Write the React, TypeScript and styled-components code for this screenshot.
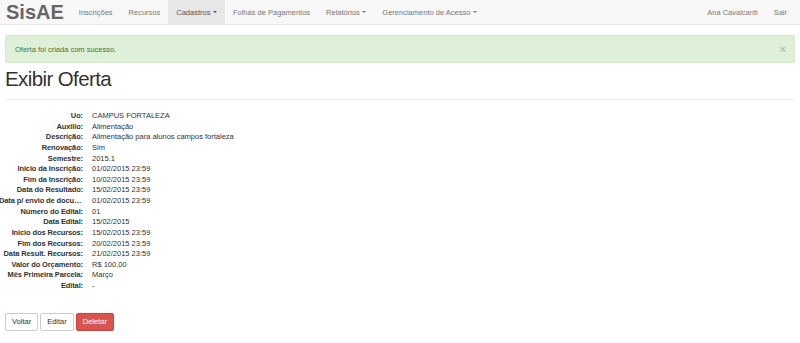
import { Fragment } from "react";
import styled, { createGlobalStyle } from "styled-components";

const GlobalStyle = createGlobalStyle`
    body {
        margin: 0;
        background: #fff;
        font-family: "Liberation Sans", Arial, sans-serif;
        color: #333;
    }
`;

const Navbar = styled.nav`
    display: flex;
    align-items: stretch;
    height: 24px;
    background-color: #f8f8f8;
    border-bottom: 1px solid #e7e7e7;
    padding: 0 5px 0 5px;
`;

const Brand = styled.a`
    display: flex;
    align-items: center;
    font-size: 20px;
    font-weight: 700;
    color: #666;
    padding: 0 7px 0 1px;
    text-decoration: none;
`;

const NavList = styled.ul`
    display: flex;
    list-style: none;
    margin: 0;
    padding: 0;
`;

const RightList = styled(NavList)`
    margin-left: auto;
`;

const NavItem = styled.li<{ $active?: boolean }>`
    display: flex;
    align-items: center;
    padding: 0 8px;
    font-size: 7.5px;
    color: ${(p) => (p.$active ? "#555" : "#777")};
    background-color: ${(p) => (p.$active ? "#e7e7e7" : "transparent")};
    white-space: nowrap;
`;

const Caret = styled.span`
    display: inline-block;
    width: 0;
    height: 0;
    margin-left: 2.5px;
    border-top: 2px solid currentColor;
    border-left: 2px solid transparent;
    border-right: 2px solid transparent;
`;

const Container = styled.main`
    padding: 10px 5px 0 5px;
`;

const Alert = styled.div`
    display: flex;
    align-items: center;
    height: 26px;
    padding: 0 9px;
    background-color: #dff0d8;
    border: 1px solid #d6e9c6;
    border-radius: 2px;
    color: #3c763d;
    font-size: 7.5px;
`;

const Close = styled.span`
    margin-left: auto;
    margin-right: -1px;
    font-size: 11px;
    font-weight: 700;
    color: #000;
    opacity: 0.2;
`;

const Title = styled.h1`
    margin: 4px 0 0 0;
    font-size: 20.5px;
    font-weight: 400;
    letter-spacing: -0.6px;
    line-height: 23px;
    color: #333;
`;

const Rule = styled.hr`
    margin: 9px 0 11px 0;
    border: 0;
    border-top: 1px solid #eee;
`;

const Details = styled.dl`
    display: grid;
    grid-template-columns: 84px 1fr;
    column-gap: 9px;
    margin: 0 0 0 -6px;
    font-size: 7.5px;
    line-height: 10.625px;
`;

const Term = styled.dt`
    font-weight: 700;
    letter-spacing: -0.12px;
    text-align: right;
    white-space: nowrap;
    overflow: hidden;
    text-overflow: ellipsis;
`;

const Desc = styled.dd`
    margin: 0;
`;

const Actions = styled.div`
    display: flex;
    gap: 2px;
    margin-top: 21px;
`;

const Button = styled.button<{ $danger?: boolean }>`
    height: 18px;
    padding: 0 6px;
    margin: 0;
    font-family: inherit;
    font-size: 7.5px;
    border-radius: 2px;
    border: 1px solid ${(p) => (p.$danger ? "#d43f3a" : "#ccc")};
    background-color: ${(p) => (p.$danger ? "#d9534f" : "#fff")};
    color: ${(p) => (p.$danger ? "#fff" : "#333")};
`;

const rows: [string, string][] = [
    ["Uo:", "CAMPUS FORTALEZA"],
    ["Auxilio:", "Alimentação"],
    ["Descrição:", "Alimentação para alunos campos fortaleza"],
    ["Renovação:", "Sim"],
    ["Semestre:", "2015.1"],
    ["Inicio da Inscrição:", "01/02/2015 23:59"],
    ["Fim da Inscrição:", "10/02/2015 23:59"],
    ["Data do Resultado:", "15/02/2015 23:59"],
    ["Data p/ envio de documentos:", "01/02/2015 23:59"],
    ["Número do Edital:", "01"],
    ["Data Edital:", "15/02/2015"],
    ["Inicio dos Recursos:", "15/02/2015 23:59"],
    ["Fim dos Recursos:", "20/02/2015 23:59"],
    ["Data Result. Recursos:", "21/02/2015 23:59"],
    ["Valor do Orçamento:", "R$ 100,00"],
    ["Mês Primeira Parcela:", "Março"],
    ["Edital:", "-"],
];

export default function App() {
    return (
        <>
            <GlobalStyle />
            <Navbar>
                <Brand>SisAE</Brand>
                <NavList>
                    <NavItem>Inscrições</NavItem>
                    <NavItem>Recursos</NavItem>
                    <NavItem $active>Cadastros<Caret /></NavItem>
                    <NavItem>Folhas de Pagamentos</NavItem>
                    <NavItem>Relatórios<Caret /></NavItem>
                    <NavItem>Gerenciamento de Acesso<Caret /></NavItem>
                </NavList>
                <RightList>
                    <NavItem>Ana Cavalcanti</NavItem>
                    <NavItem>Sair</NavItem>
                </RightList>
            </Navbar>
            <Container>
                <Alert>
                    Oferta foi criada com sucesso.
                    <Close>×</Close>
                </Alert>
                <Title>Exibir Oferta</Title>
                <Rule />
                <Details>
                    {rows.map(([term, value]) => (
                        <Fragment key={term}>
                            <Term>{term}</Term>
                            <Desc>{value}</Desc>
                        </Fragment>
                    ))}
                </Details>
                <Actions>
                    <Button>Voltar</Button>
                    <Button>Editar</Button>
                    <Button $danger>Deletar</Button>
                </Actions>
            </Container>
        </>
    );
}
